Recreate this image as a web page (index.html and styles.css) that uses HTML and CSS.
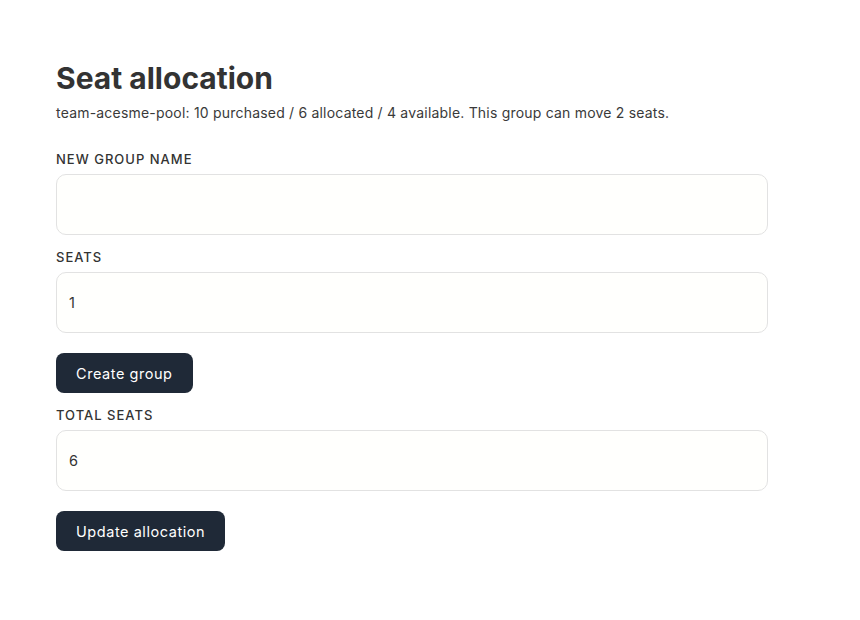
FILE: index.html
```html
<!DOCTYPE html>
<html lang="en">
<head>
<meta charset="utf-8">
<title>Seat allocation</title>
<link rel="stylesheet" href="styles.css">
</head>
<body>
<main class="page">
  <h1 class="title">Seat allocation</h1>
  <p class="summary">team-acesme-pool: 10 purchased / 6 allocated / 4 available. This group can move 2 seats.</p>
  <form class="form">
    <div class="field">
      <label class="label" for="name">NEW GROUP NAME</label>
      <input class="input" id="name" type="text" value="">
    </div>
    <div class="field">
      <label class="label" for="seats">SEATS</label>
      <input class="input" id="seats" type="text" value="1">
    </div>
    <button class="btn" type="button">Create group</button>
    <div class="field">
      <label class="label" for="total">TOTAL SEATS</label>
      <input class="input" id="total" type="text" value="6">
    </div>
    <button class="btn" type="button">Update allocation</button>
  </form>
</main>
</body>
</html>
```

FILE: styles.css
```css
html, body {
  margin: 0;
  background: #ffffff;
}
body {
  font-family: Inter, "Liberation Sans", Arial, sans-serif;
  color: #333333;
}
.page {
  width: 712px;
  padding: 56px 0 0 56px;
}
.title {
  margin: 0;
  font-size: 30px;
  line-height: 44px;
  font-weight: 700;
  color: #333333;
}
.summary {
  margin: 3px 0 0;
  font-size: 14px;
  line-height: 20px;
  letter-spacing: 0.2px;
  color: #3a3a3a;
}
.form {
  margin-top: 28px;
  display: flex;
  flex-direction: column;
  align-items: flex-start;
}
.field {
  display: flex;
  flex-direction: column;
  width: 100%;
  margin-bottom: 14px;
}
.label {
  font-size: 13px;
  line-height: 16px;
  font-weight: 500;
  letter-spacing: 1px;
  color: #333333;
  margin-bottom: 7px;
}
.input {
  box-sizing: border-box;
  height: 61px;
  width: 100%;
  border: 1px solid #e2e2e2;
  border-radius: 10px;
  background: #fffffd;
  padding: 0 12px;
  font-family: inherit;
  font-size: 14.5px;
  color: #333333;
  outline: none;
}
.btn {
  margin: 6px 0 14px;
  height: 40px;
  padding: 0 20px;
  border: none;
  border-radius: 8px;
  background: #1f2937;
  color: #ffffff;
  font-family: inherit;
  font-size: 14.5px;
  font-weight: 400;
  letter-spacing: 0.55px;
  cursor: pointer;
}
```
